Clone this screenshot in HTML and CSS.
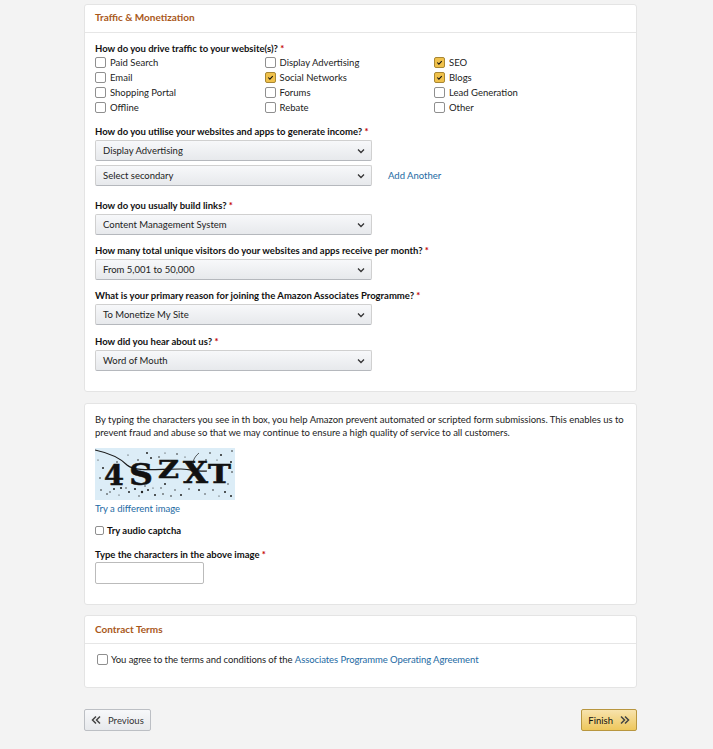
FILE: index.html
```html
<!DOCTYPE html>
<html lang="en">
<head>
    <meta charset="UTF-8">
    <title>Traffic &amp; Monetization</title>
    <link rel="stylesheet" href="styles.css">
</head>
<body>
    <div class="page">
        <div class="card">
            <div class="card-head">Traffic &amp; Monetization</div>
            <div class="card-body traffic">
                <div class="label first">How do you drive traffic to your website(s)? <span class="req">*</span></div>
                <div class="check-grid">
                    <div class="check"><span class="box"></span>Paid Search</div>
                    <div class="check"><span class="box"></span>Display Advertising</div>
                    <div class="check"><span class="box on"><svg viewBox="0 0 12 12"><path d="M3 6l2.200 2.200L9 4.200"/></svg></span>SEO</div>
                    <div class="check"><span class="box"></span>Email</div>
                    <div class="check"><span class="box on"><svg viewBox="0 0 12 12"><path d="M3 6l2.200 2.200L9 4.200"/></svg></span>Social Networks</div>
                    <div class="check"><span class="box on"><svg viewBox="0 0 12 12"><path d="M3 6l2.200 2.200L9 4.200"/></svg></span>Blogs</div>
                    <div class="check"><span class="box"></span>Shopping Portal</div>
                    <div class="check"><span class="box"></span>Forums</div>
                    <div class="check"><span class="box"></span>Lead Generation</div>
                    <div class="check"><span class="box"></span>Offline</div>
                    <div class="check"><span class="box"></span>Rebate</div>
                    <div class="check"><span class="box"></span>Other</div>
                </div>

                <div class="label second">How do you utilise your websites and apps to generate income? <span class="req">*</span></div>
                <div class="select">Display Advertising<svg class="chev" viewBox="0 0 10 10"><path d="M2 3.500l3 3 3-3"/></svg></div>
                <div class="select-row">
                    <div class="select">Select secondary<svg class="chev" viewBox="0 0 10 10"><path d="M2 3.500l3 3 3-3"/></svg></div>
                    <a class="link add">Add Another</a>
                </div>

                <div class="label">How do you usually build links? <span class="req">*</span></div>
                <div class="select">Content Management System<svg class="chev" viewBox="0 0 10 10"><path d="M2 3.500l3 3 3-3"/></svg></div>

                <div class="label">How many total unique visitors do your websites and apps receive per month? <span class="req">*</span></div>
                <div class="select">From 5,001 to 50,000<svg class="chev" viewBox="0 0 10 10"><path d="M2 3.500l3 3 3-3"/></svg></div>

                <div class="label">What is your primary reason for joining the Amazon Associates Programme? <span class="req">*</span></div>
                <div class="select">To Monetize My Site<svg class="chev" viewBox="0 0 10 10"><path d="M2 3.500l3 3 3-3"/></svg></div>

                <div class="label last">How did you hear about us? <span class="req">*</span></div>
                <div class="select">Word of Mouth<svg class="chev" viewBox="0 0 10 10"><path d="M2 3.500l3 3 3-3"/></svg></div>
            </div>
        </div>

        <div class="card captcha">
            <p class="intro">By typing the characters you see in th box, you help Amazon prevent automated or scripted form submissions. This enables us to prevent fraud and abuse so that we may continue to ensure a high quality of service to all customers.</p>
            <svg class="captcha-img" viewBox="0 0 140 52">
                <rect width="140" height="52" fill="#dcedf7"/>
                <path class="scrawl" d="M0 2C14 5 24 9 32 17C40 24 60 21 86 21C92 21 104 24 112 23"/>
                <path class="scrawl thin" d="M101 22C96 16 98 10 104 5"/>
                <text x="9" y="37" class="cap-letter" font-size="27" textLength="20" lengthAdjust="spacingAndGlyphs">4</text>
                <text x="34" y="37" class="cap-letter" font-size="30" textLength="24" lengthAdjust="spacingAndGlyphs">S</text>
                <text x="63" y="30" class="cap-letter" font-size="24" textLength="21" lengthAdjust="spacingAndGlyphs">Z</text>
                <text x="88" y="35" class="cap-letter" font-size="29" textLength="25" lengthAdjust="spacingAndGlyphs">X</text>
                <text x="113" y="35" class="cap-letter" font-size="26" textLength="23" lengthAdjust="spacingAndGlyphs">T</text>
                <g class="specks">
                    <circle cx="8" cy="20" r="1"/><circle cx="5" cy="30" r=".8"/><circle cx="6" cy="42" r=".8"/>
                    <circle cx="19" cy="41" r="1"/><circle cx="26" cy="40" r="1.100"/><circle cx="34" cy="44" r="1"/>
                    <circle cx="40" cy="41" r="1.100"/><circle cx="47" cy="44" r="1.200"/><circle cx="53" cy="42" r="1"/>
                    <circle cx="60" cy="47" r="1"/><circle cx="68" cy="46" r=".8"/><circle cx="76" cy="48" r=".8"/>
                    <circle cx="86" cy="47" r="1"/><circle cx="94" cy="41" r=".8"/><circle cx="104" cy="42" r="1"/>
                    <circle cx="118" cy="42" r=".8"/><circle cx="130" cy="44" r="1"/><circle cx="136" cy="48" r="1"/>
                    <circle cx="52" cy="5" r="1"/><circle cx="56" cy="10" r="1"/><circle cx="64" cy="9" r=".8"/>
                    <circle cx="75" cy="13" r="1"/><circle cx="82" cy="6" r=".8"/><circle cx="115" cy="5" r=".8"/>
                    <circle cx="126" cy="7" r="1"/><circle cx="137" cy="3" r=".8"/><circle cx="136" cy="14" r="1"/>
                    <circle cx="137" cy="24" r=".8"/><circle cx="43" cy="12" r=".8"/><circle cx="22" cy="14" r=".8"/>
                    <circle cx="12" cy="46" r=".8"/><circle cx="111" cy="12" r=".8"/><circle cx="70" cy="36" r="1"/>
                    <circle cx="3" cy="12" r=".6"/><circle cx="15" cy="44" r=".7"/><circle cx="24" cy="47" r=".6"/>
                    <circle cx="31" cy="40" r=".7"/><circle cx="44" cy="48" r=".7"/><circle cx="50" cy="38" r=".7"/>
                    <circle cx="58" cy="40" r=".6"/><circle cx="66" cy="40" r=".7"/><circle cx="80" cy="42" r=".7"/>
                    <circle cx="90" cy="9" r=".6"/><circle cx="98" cy="14" r=".7"/><circle cx="122" cy="12" r=".6"/>
                    <circle cx="128" cy="18" r=".6"/><circle cx="110" cy="46" r=".7"/><circle cx="124" cy="48" r=".6"/>
                    <circle cx="33" cy="7" r=".6"/><circle cx="70" cy="5" r=".6"/><circle cx="133" cy="36" r=".7"/>
                </g>
            </svg>
            <a class="link try">Try a different image</a>
            <div class="audio"><span class="box small"></span>Try audio captcha</div>
            <div class="label type">Type the characters in the above image <span class="req">*</span></div>
            <input class="text-input" type="text">
        </div>

        <div class="card terms">
            <div class="card-head">Contract Terms</div>
            <div class="agree"><span class="box"></span>You agree to the terms and conditions of the&nbsp;<a class="link">Associates Programme Operating Agreement</a></div>
        </div>

        <div class="actions">
            <div class="btn">
                <svg class="arrows" viewBox="0 0 10 10"><path d="M5 1.500L1.500 5 5 8.500M9 1.500L5.500 5 9 8.500"/></svg>Previous
            </div>
            <div class="btn primary">
                Finish<svg class="arrows" viewBox="0 0 10 10"><path d="M1 1.500L4.500 5 1 8.500M5 1.500L8.500 5 5 8.500"/></svg>
            </div>
        </div>
    </div>
</body>
</html>
```

FILE: styles.css
```css
*{
    padding: 0;
    margin: 0;
    box-sizing: border-box;
}

body{
    background: #f3f3f3;
    color: #111;
    font-family: "Lato", "Liberation Sans", sans-serif;
    font-size: 9.5px;
    line-height: 13px;
}

.page{
    width: 553px;
    margin-left: 84px;
    padding-top: 4px;
}

.card{
    background: #fff;
    border: 1px solid #e4e4e4;
    border-radius: 3px;
    margin-bottom: 11px;
}

.card-head{
    height: 28px;
    padding-left: 10px;
    border-bottom: 1px solid #e6e6e6;
    color: #a9581a;
    font-size: 10px;
    font-weight: 700;
    line-height: 25px;
}

.card-body{
    padding: 0 10px;
}

.traffic{
    padding-bottom: 20px;
}

.label{
    margin-top: 9px;
    margin-bottom: 2px;
    font-weight: 700;
}

.label.first{
    margin-top: 9px;
    margin-bottom: 0;
}

.label.second,
.label.last{
    margin-top: 10px;
}

.req{
    color: #c40000;
}

.check-grid{
    display: grid;
    grid-template-columns: 169.5px 169.5px 1fr;
    grid-auto-rows: 15px;
}

.check{
    display: flex;
    align-items: center;
    color: #222;
}

.box{
    flex: none;
    display: block;
    width: 11px;
    height: 11px;
    margin-right: 4px;
    background: #fff;
    border: 1px solid #8f8f8f;
    border-radius: 2px;
}

.box.on{
    background: #f0c14b;
    border-color: #a88734;
}

.box svg{
    display: block;
    width: 9px;
    height: 9px;
}

.box svg path{
    fill: none;
    stroke: #111;
    stroke-width: 1.4;
}

.box.small{
    width: 9px;
    height: 9px;
    margin-right: 3px;
}

.select{
    display: flex;
    align-items: center;
    justify-content: space-between;
    width: 277px;
    height: 21px;
    padding: 0 5px 0 7px;
    background: linear-gradient(#f7f8fa, #e7e9ec);
    border: 1px solid #d0d0d0;
    border-bottom-color: #b5b8bd;
    border-radius: 2px;
    color: #222;
}

.select-row{
    display: flex;
    align-items: center;
    margin-top: 4px;
    margin-bottom: 13px;
}

.add{
    margin-left: 16px;
}

.chev{
    width: 10px;
    height: 10px;
}

.chev path{
    fill: none;
    stroke: #333;
    stroke-width: 1.3;
}

.link{
    color: #236aa3;
}

.captcha{
    height: 202px;
    margin-bottom: 10px;
    padding: 9px 10px 0;
}

.intro{
    color: #222;
    letter-spacing: -0.03px;
}

.captcha-img{
    display: block;
    width: 140px;
    height: 52px;
    margin-top: 9px;
}

.scrawl{
    fill: none;
    stroke: #1a1a1a;
    stroke-width: 1.2;
}

.scrawl.thin{
    stroke-width: 0.7;
}

.cap-letter{
    font-family: "DejaVu Serif", serif;
    font-weight: 700;
    fill: #111;
    stroke: #111;
    stroke-width: 0.5;
}

.specks{
    fill: #222;
}

.try{
    display: block;
    margin-top: 2px;
}

.audio{
    display: flex;
    align-items: center;
    margin-top: 9px;
    font-weight: 700;
}

.type{
    margin-top: 11px;
    margin-bottom: 1px;
}

.text-input{
    display: block;
    width: 109px;
    height: 22px;
    border: 1px solid #bbb;
    border-radius: 2px;
    background: #fff;
}

.terms{
    height: 73px;
    margin-bottom: 21px;
}

.terms .card-head{
    line-height: 26px;
}

.agree{
    display: flex;
    align-items: center;
    padding: 9px 0 0 12px;
    color: #222;
    letter-spacing: -0.08px;
}

.agree .box{
    margin-right: 3px;
}

.actions{
    display: flex;
    justify-content: space-between;
}

.btn{
    display: flex;
    align-items: center;
    height: 22px;
    padding: 0 6px;
    background: linear-gradient(#f7f8fa, #e7e9ec);
    border: 1px solid #bcbfc4;
    border-radius: 2px;
    color: #333;
}

.btn.primary{
    background: linear-gradient(#f8e3ad, #eec75c);
    border-color: #b8963f;
    color: #111;
}

.arrows{
    width: 10px;
    height: 10px;
    margin-right: 7px;
}

.primary .arrows{
    margin-right: 0;
    margin-left: 7px;
}

.arrows path{
    fill: none;
    stroke: #444;
    stroke-width: 1.5;
}
```
